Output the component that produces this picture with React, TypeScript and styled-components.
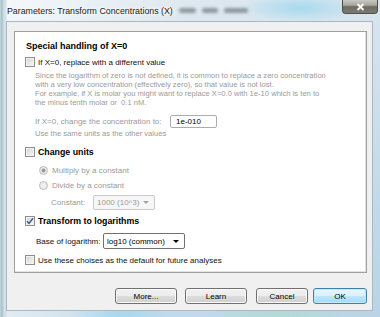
import React from "react";
import styled, { createGlobalStyle } from "styled-components";

const GlobalStyle = createGlobalStyle`
  html, body {
    margin: 0;
    padding: 0;
    background: #ffffff;
  }
  body {
    font-family: "Liberation Sans", Arial, sans-serif;
  }
`;

// Aero glass frame round the dialog
const Frame = styled.div`
  position: relative;
  width: 380px;
  height: 317px;
  box-sizing: border-box;
  display: flex;
  flex-direction: column;
  padding: 0 7px 6px 6px;
  overflow: hidden;
  background:
    radial-gradient(ellipse 60px 14px at 300px 8px, rgba(150, 214, 240, 0.75), transparent),
    radial-gradient(ellipse 50px 10px at 120px 314px, rgba(150, 214, 240, 0.7), transparent),
    radial-gradient(ellipse 70px 10px at 280px 314px, rgba(170, 220, 200, 0.6), transparent),
    linear-gradient(90deg, #c8d4dc 0px, #9fc2c9 2px, #d6e2ea 4px, #cfdde6 6px, transparent 7px),
    linear-gradient(100deg, rgba(255, 255, 255, 0.75) 0%, rgba(255, 255, 255, 0.15) 45%, rgba(255, 255, 255, 0) 100%),
    linear-gradient(180deg, #d7e4ed 0%, #c4d9e7 60%, #b9d4e6 100%);
`;

const TitleBar = styled.div`
  height: 21px;
  display: flex;
  align-items: center;
  padding-left: 1px;
`;

const Title = styled.span`
  font-size: 8.8px;
  color: #1a1a1a;
  white-space: nowrap;
  text-shadow: 0 0 5px #ffffff, 0 0 3px #ffffff, 0 0 8px #ffffff;
`;

// blurred reflections in the glass behind the caption
const Ghost = styled.span<{ $w: number; $ml: number }>`
  display: inline-block;
  width: ${(p) => p.$w}px;
  height: 5px;
  margin-left: ${(p) => p.$ml}px;
  border-radius: 3px;
  background: rgba(90, 100, 105, 0.6);
  filter: blur(1.6px);
`;

const CloseButton = styled.div`
  margin-left: auto;
  margin-right: -5px;
  align-self: flex-start;
  width: 36px;
  height: 14px;
  box-sizing: border-box;
  border: 1px solid #4f4f48;
  border-top: none;
  border-radius: 0 0 4px 4px;
  background: linear-gradient(180deg, #c9c9c1 0%, #a7a79f 40%, #6c6c63 52%, #7b7b72 100%);
  display: flex;
  align-items: center;
  justify-content: center;
`;

const Client = styled.div`
  flex: 1;
  display: flex;
  flex-direction: column;
  background: #f0f0f0;
  border: 1px solid #a9b8c2;
  padding: 9px 5px 0 7px;
`;

const Panel = styled.div`
  height: 242px;
  box-sizing: border-box;
  background: #ffffff;
  border: 1px solid #a0a0a0;
  box-shadow: inset -1px -1px 0 #e3e3e3;
  padding: 8px 0 0 10px;
`;

const Row = styled.div<{ $mt: number; $h?: number; $indent?: number }>`
  display: flex;
  align-items: center;
  height: ${(p) => p.$h ?? 12}px;
  margin-top: ${(p) => p.$mt}px;
  padding-left: ${(p) => p.$indent ?? 0}px;
  font-size: 8px;
  color: #111111;
  white-space: nowrap;
`;

const Heading = styled.span`
  font-size: 9px;
  font-weight: bold;
  color: #000000;
`;

const BoldLabel = styled.span`
  font-size: 8.8px;
  font-weight: bold;
  color: #000000;
  margin-left: 3px;
`;

const Label = styled.span<{ $w?: number; $muted?: boolean; $ml?: number }>`
  display: inline-block;
  width: ${(p) => (p.$w ? `${p.$w}px` : "auto")};
  margin-left: ${(p) => p.$ml ?? 0}px;
  color: ${(p) => (p.$muted ? "#9a9a9a" : "#111111")};
`;

const Note = styled.div<{ $mt: number }>`
  margin-top: ${(p) => p.$mt}px;
  padding-left: 10px;
  font-size: 7.6px;
  line-height: 9px;
  color: #9a9a9a;
  white-space: nowrap;
`;

const Box = styled.span`
  width: 10px;
  height: 10px;
  box-sizing: border-box;
  border: 1px solid #8e8f8f;
  background: linear-gradient(135deg, #cfcfcf 0%, #e6e6e6 50%, #f8f8f8 100%);
  box-shadow: inset 0 0 0 1px #f3f3f3;
  display: flex;
  align-items: center;
  justify-content: center;
  flex: none;
`;

const Radio = styled.span<{ $on?: boolean }>`
  width: 9px;
  height: 9px;
  box-sizing: border-box;
  border-radius: 50%;
  border: 1px solid #bcbcbc;
  background: radial-gradient(circle at 50% 50%, ${(p) => (p.$on ? "#8e8e8e 0, #a8a8a8 1.8px, #eeeeee 2.4px" : "#f4f4f4 0")}, #e2e2e2 100%);
  flex: none;
  margin-right: 4px;
`;

const TextBox = styled.div`
  width: 47px;
  height: 13px;
  box-sizing: border-box;
  border: 1px solid #abadb3;
  border-radius: 2px;
  background: #ffffff;
  font-size: 8px;
  color: #000000;
  padding-left: 5px;
  display: flex;
  align-items: center;
`;

const Select = styled.div<{ $w: number; $h: number; $disabled?: boolean }>`
  width: ${(p) => p.$w}px;
  height: ${(p) => p.$h}px;
  box-sizing: border-box;
  border: 1px solid ${(p) => (p.$disabled ? "#c9c9c9" : "#707070")};
  border-radius: 2px;
  background: ${(p) => (p.$disabled ? "#f7f7f7" : "#ffffff")};
  color: ${(p) => (p.$disabled ? "#9a9a9a" : "#000000")};
  font-size: 8px;
  display: flex;
  align-items: center;
  padding: 0 5px 0 3px;
`;

const Arrow = styled.span<{ $disabled?: boolean }>`
  margin-left: auto;
  width: 0;
  height: 0;
  border-left: 3px solid transparent;
  border-right: 3px solid transparent;
  border-top: 3px solid ${(p) => (p.$disabled ? "#a5a5a5" : "#000000")};
`;

const ButtonRow = styled.div`
  margin-top: 15px;
  height: 16px;
  display: flex;
  justify-content: flex-end;
`;

const Button = styled.div<{ $w: number; $ml: number; $default?: boolean }>`
  width: ${(p) => p.$w}px;
  height: 16px;
  margin-left: ${(p) => p.$ml}px;
  box-sizing: border-box;
  border: 1px solid ${(p) => (p.$default ? "#3c7fb1" : "#707070")};
  border-radius: 3px;
  background: ${(p) =>
    p.$default
      ? "linear-gradient(180deg, #eaf6fd 0%, #d9f0fc 50%, #bee6fd 51%, #a7d9f5 100%)"
      : "linear-gradient(180deg, #f2f2f2 0%, #ebebeb 50%, #dddddd 51%, #cfcfcf 100%)"};
  box-shadow: inset 0 0 0 1px ${(p) => (p.$default ? "#c5e8fb" : "#fbfbfb")};
  font-size: 8px;
  color: #000000;
  display: flex;
  align-items: center;
  justify-content: center;
`;

const Check = () => (
  <svg width="8" height="8" viewBox="0 0 8 8">
    <path d="M1 4.2 L3 6.4 L7 1.2" fill="none" stroke="#3e5e86" strokeWidth="1.5" />
  </svg>
);

const App = () => {
  return (
    <>
      <GlobalStyle />
      <Frame>
        <TitleBar>
          <Title>Parameters: Transform Concentrations (X)</Title>
          <Ghost $w={17} $ml={6} />
          <Ghost $w={16} $ml={6} />
          <Ghost $w={24} $ml={6} />
          <CloseButton>
            <svg width="9" height="8" viewBox="0 0 9 8">
              <path d="M1.5 1 L7.5 7 M7.5 1 L1.5 7" stroke="#ffffff" strokeWidth="1.8" />
            </svg>
          </CloseButton>
        </TitleBar>
        <Client>
          <Panel>
            <Row $mt={0} $indent={1}>
              <Heading>Special handling of X=0</Heading>
            </Row>
            <Row $mt={4}>
              <Box />
              <Label $ml={3}>If X=0, replace with a different value</Label>
            </Row>
            <Note $mt={3}>
              Since the logarithm of zero is not defined, it is common to replace a zero concentration
              <br />
              with a very low concentration (effectively zero), so that value is not lost.
              <br />
              For example, if X is molar you might want to replace X=0.0 with 1e-10 which is ten to
              <br />
              the minus tenth molar or&nbsp; 0.1 nM.
            </Note>
            <Row $mt={8} $h={13} $indent={10}>
              <Label $w={135} $muted>
                If X=0, change the concentration to:
              </Label>
              <TextBox>1e-010</TextBox>
            </Row>
            <Note $mt={1}>Use the same units as the other values</Note>
            <Row $mt={8}>
              <Box />
              <BoldLabel>Change units</BoldLabel>
            </Row>
            <Row $mt={6} $indent={14}>
              <Radio $on />
              <Label $muted>Multiply by a constant</Label>
            </Row>
            <Row $mt={3} $indent={14}>
              <Radio />
              <Label $muted>Divide by a constant</Label>
            </Row>
            <Row $mt={4} $h={15} $indent={26}>
              <Label $w={42} $muted>
                Constant:
              </Label>
              <Select $w={62} $h={15} $disabled>
                1000 (10^3)
                <Arrow $disabled />
              </Select>
            </Row>
            <Row $mt={5}>
              <Box>
                <Check />
              </Box>
              <BoldLabel>Transform to logarithms</BoldLabel>
            </Row>
            <Row $mt={6} $h={16} $indent={11}>
              <Label $w={67}>Base of logarithm:</Label>
              <Select $w={82} $h={16}>
                log10 (common)
                <Arrow />
              </Select>
            </Row>
            <Row $mt={5}>
              <Box />
              <Label $ml={3}>Use these choises as the default for future analyses</Label>
            </Row>
          </Panel>
          <ButtonRow>
            <Button $w={62} $ml={0}>More...</Button>
            <Button $w={62} $ml={8}>Learn</Button>
            <Button $w={52} $ml={9}>Cancel</Button>
            <Button $w={54} $ml={5} $default>
              OK
            </Button>
          </ButtonRow>
        </Client>
      </Frame>
    </>
  );
};

export default App;
